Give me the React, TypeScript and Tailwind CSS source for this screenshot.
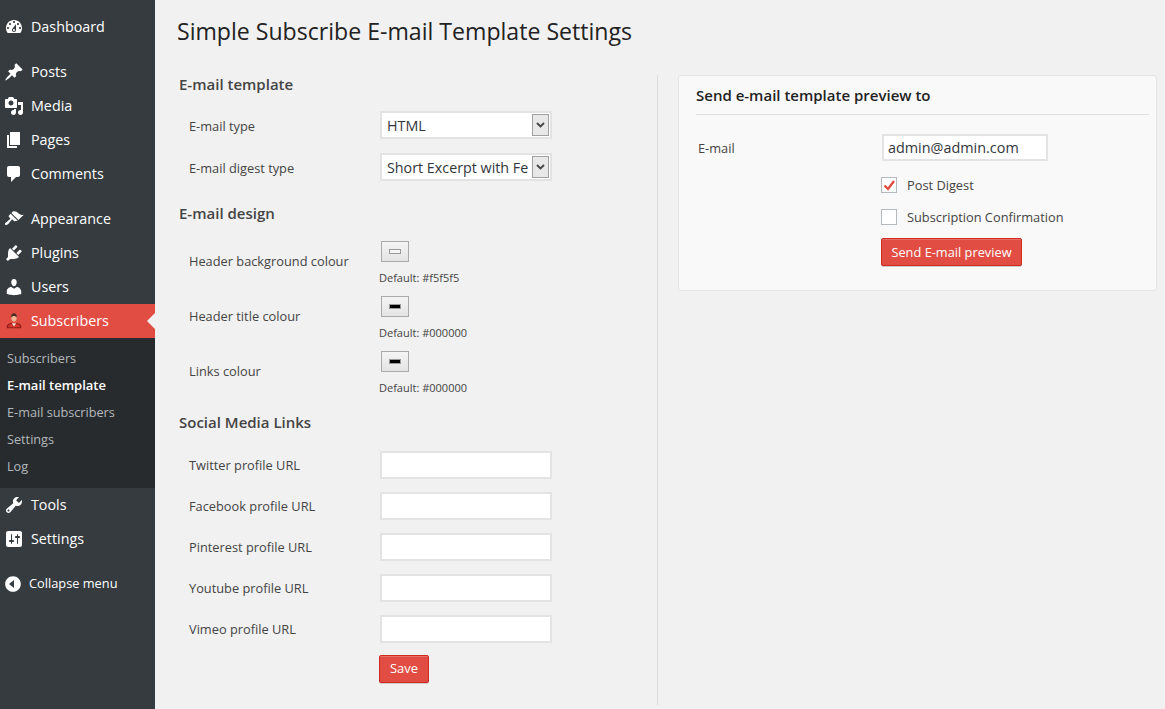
import React from "react";

const P: Record<string, string> = {
  dashboard:
    "M3.76 16h12.48c1.1-1.37 1.76-3.11 1.76-5 0-4.42-3.58-8-8-8s-8 3.58-8 8c0 1.89.66 3.63 1.76 5zM10 4c.55 0 1 .45 1 1s-.45 1-1 1-1-.45-1-1 .45-1 1-1zM6 6c.55 0 1 .45 1 1s-.45 1-1 1-1-.45-1-1 .45-1 1-1zm8 0c.55 0 1 .45 1 1s-.45 1-1 1-1-.45-1-1 .45-1 1-1zm-5.37 5.55L12 7v6c0 1.1-.9 2-2 2s-2-.9-2-2c0-.57.24-1.08.63-1.45zM4 10c.55 0 1 .45 1 1s-.45 1-1 1-1-.45-1-1 .45-1 1-1zm12 0c.55 0 1 .45 1 1s-.45 1-1 1-1-.45-1-1 .45-1 1-1zm-5 3c0-.55-.45-1-1-1s-1 .45-1 1 .45 1 1 1 1-.45 1-1z",
  pin: "M10.44 3.02l1.82-1.82 6.36 6.35-1.83 1.82c-1.05-.68-2.48-.57-3.41.36l-.75.75c-.92.93-1.04 2.35-.35 3.41l-1.83 1.82-2.41-2.41-2.8 2.79c-.42.42-3.38 2.71-3.8 2.29s1.86-3.39 2.28-3.81l2.79-2.79L4.1 9.36l1.83-1.82c1.05.69 2.48.57 3.4-.36l.75-.75c.93-.92 1.05-2.35.36-3.41z",
  media:
    "M13 11V4c0-.55-.45-1-1-1h-1.67L9 1H5L3.67 3H2c-.55 0-1 .45-1 1v7c0 .55.45 1 1 1h10c.55 0 1-.45 1-1zM7 4.5c1.38 0 2.5 1.12 2.5 2.5S8.38 9.5 7 9.5 4.5 8.38 4.5 7 5.62 4.5 7 4.5zM14 6h5v10.5c0 1.38-1.12 2.5-2.5 2.5S14 17.88 14 16.5s1.12-2.5 2.5-2.5c.17 0 .34.02.5.05V9h-3V6zm-4 8.05V13h2v3.5c0 1.38-1.12 2.5-2.5 2.5S7 17.88 7 16.5 8.12 14 9.5 14c.17 0 .34.02.5.05z",
  page: "M6 15V2h10v13H6zm-1 1h8v2H3V5h2v11z",
  comments: "M5 2h9c1.1 0 2 .9 2 2v7c0 1.1-.9 2-2 2h-2l-5 5v-5H5c-1.1 0-2-.9-2-2V4c0-1.1.9-2 2-2z",
  appearance:
    "M14.48 11.06L7.41 3.99l1.5-1.5c.5-.56 2.3-.47 3.51.32 1.21.8 1.43 1.28 2.91 2.1 1.18.64 2.45 1.26 4.45.85zm-.71.71L6.7 4.7 4.93 6.47c-.39.39-.39 1.02 0 1.41l1.06 1.06c.39.39.39 1.03 0 1.42-.6.6-1.43 1.11-2.21 1.69-.35.26-.7.53-1.01.84C1.43 13.23.4 14.89 1.2 15.7c.8.8 2.46-.23 3.8-1.56.31-.31.58-.66.85-1.02.57-.78 1.08-1.61 1.69-2.21.39-.39 1.02-.39 1.41 0l1.06 1.06c.39.39 1.02.39 1.41 0z",
  plugins:
    "M13.11 4.36L9.87 7.6 8 5.73l3.24-3.24c.35-.34 1.05-.2 1.56.32.52.51.66 1.21.31 1.55zm-8 1.77l.91-1.12 9.01 9.01-1.19.84c-.71.71-2.63 1.16-3.82 1.16H6.14L4.9 17.26c-.59.59-1.54.59-2.12 0-.59-.58-.59-1.53 0-2.12l1.24-1.24v-3.88c0-1.13.4-3.19 1.09-3.89zm7.26 3.97l3.24-3.24c.34-.35 1.04-.21 1.55.31.52.51.66 1.21.31 1.55l-3.24 3.25z",
  users:
    "M10 9.25c-2.27 0-2.73-3.44-2.73-3.44C7 4.02 7.82 2 9.97 2c2.16 0 2.98 2.02 2.71 3.81 0 0-.41 3.44-2.68 3.44zm0 2.57L12.72 10c2.39 0 4.52 2.33 4.52 4.53v2.49s-3.65 1.13-7.24 1.13c-3.65 0-7.24-1.13-7.24-1.13v-2.49c0-2.25 1.94-4.48 4.47-4.48z",
  tools:
    "M16.68 9.77c-1.34 1.34-3.3 1.67-4.95.99l-5.41 6.52c-.99.99-2.59.99-3.58 0s-.99-2.59 0-3.57l6.52-5.42c-.68-1.65-.35-3.61.99-4.95 1.28-1.28 3.12-1.62 4.72-1.06l-2.89 2.89 2.82 2.82 2.86-2.87c.53 1.58.18 3.39-1.08 4.65zM3.81 16.21c.4.39 1.04.39 1.43 0 .4-.4.4-1.04 0-1.43-.39-.4-1.03-.4-1.43 0-.39.39-.39 1.03 0 1.43z",
  settings:
    "M18 16V4c0-1.1-.9-2-2-2H4c-1.1 0-2 .9-2 2v12c0 1.1.9 2 2 2h12c1.1 0 2-.9 2-2zM8 11h1c.55 0 1 .45 1 1s-.45 1-1 1H8v1.5c0 .28-.22.5-.5.5s-.5-.22-.5-.5V13H6c-.55 0-1-.45-1-1s.45-1 1-1h1V5.5c0-.28.22-.5.5-.5s.5.22.5.5V11zm5-2h-1c-.55 0-1-.45-1-1s.45-1 1-1h1V5.5c0-.28.22-.5.5-.5s.5.22.5.5V7h1c.55 0 1 .45 1 1s-.45 1-1 1h-1v5.5c0 .28-.22.5-.5.5s-.5-.22-.5-.5V9z",
  collapse: "M10 2.16c4.33 0 7.84 3.51 7.84 7.84s-3.51 7.84-7.84 7.84-7.84-3.51-7.84-7.84S5.67 2.16 10 2.16zM11 14V6l-5 4z",
};

function Icon({ name }: { name: string }) {
  return (
    <svg viewBox="0 0 20 20" className="w-5 h-5 fill-white shrink-0" fillRule="evenodd">
      <path d={P[name]} />
    </svg>
  );
}

function SubscriberIcon() {
  return (
    <svg viewBox="0 0 20 20" className="w-[18px] h-[18px] shrink-0">
      <path d="M2 18v-2.500c0-1.600 2.600-2.700 4.600-3.200h6.800c2 .5 4.600 1.600 4.600 3.200V18z" fill="#8f1f18" />
      <path d="M3.500 17v-1.500c0-1 2-1.900 3.500-2.300l3 3 3-3c1.500.4 3.500 1.300 3.500 2.300V17z" fill="#d9352b" />
      <path d="M7.500 12.500 10 16l2.500-3.500z" fill="#fbe6dc" />
      <ellipse cx="10" cy="6.500" rx="3" ry="4.200" fill="#f0b795" />
      <path d="M7 6.500c-.6-3.300 1-5 3-5s3.600 1.700 3 5c-.8-1.500-1.600-2-3-2s-2.200.5-3 2z" fill="#4a2c20" />
    </svg>
  );
}

function MenuItem({ icon, label, current }: { icon: string; label: string; current?: boolean }) {
  return (
    <div className={`relative h-[34px] flex items-center text-[14.3px] text-white ${current ? "bg-[#e14d43]" : ""}`}>
      <span className="w-[28px] flex justify-center">{icon === "subscriber" ? <SubscriberIcon /> : <Icon name={icon} />}</span>
      <span className="ml-[3px]">{label}</span>
      {current && (
        <span className="absolute right-0 top-[9px] w-0 h-0 border-y-[8px] border-y-transparent border-r-[8px] border-r-[#f1f1f1]" />
      )}
    </div>
  );
}

function SubItem({ label, active }: { label: string; active?: boolean }) {
  return (
    <div className={`h-[27px] flex items-center pl-[7px] ${active ? "text-[13px] font-semibold text-white" : "text-[12.7px] text-[#b5b9bc]"}`}>{label}</div>
  );
}

function Sidebar() {
  return (
    <aside className="w-[155px] shrink-0 bg-[#363b3f] pt-[10px]">
      <MenuItem icon="dashboard" label="Dashboard" />
      <div className="mt-[11px]">
        <MenuItem icon="pin" label="Posts" />
        <MenuItem icon="media" label="Media" />
        <MenuItem icon="page" label="Pages" />
        <MenuItem icon="comments" label="Comments" />
      </div>
      <div className="mt-[11px]">
        <MenuItem icon="appearance" label="Appearance" />
        <MenuItem icon="plugins" label="Plugins" />
        <MenuItem icon="users" label="Users" />
        <MenuItem icon="subscriber" label="Subscribers" current />
      </div>
      <div className="bg-[#272b2e] pt-[7px] pb-[8px]">
        <SubItem label="Subscribers" />
        <SubItem label="E-mail template" active />
        <SubItem label="E-mail subscribers" />
        <SubItem label="Settings" />
        <SubItem label="Log" />
      </div>
      <MenuItem icon="tools" label="Tools" />
      <MenuItem icon="settings" label="Settings" />
      <div className="mt-[11px] h-[34px] flex items-center pl-[3px] text-[12.8px] text-white">
        <span className="w-[20px] flex justify-center"><Icon name="collapse" /></span>
        <span className="ml-[6px]">Collapse menu</span>
      </div>
    </aside>
  );
}

const fieldCls = "w-[172px] h-[28px] bg-white border-2 border-[#e3e3e3]";

function SelectBox({ value }: { value: string }) {
  return (
    <div className={`${fieldCls} flex items-center pl-[5px] pr-[1px] text-[14.3px] text-[#32373c]`}>
      <span className="flex-1 whitespace-nowrap pt-[2px]">{value}</span>
      <span className="w-[17px] h-[22px] shrink-0 flex items-center justify-center bg-[#e8e8e8] border border-[#a0a0a0]">
        <svg viewBox="0 0 9 6" className="w-[9px] h-[6px]">
          <path d="M1 1l3.500 3.500L8 1" fill="none" stroke="#444" strokeWidth="1.800" />
        </svg>
      </span>
    </div>
  );
}

function Heading({ children, className }: { children: React.ReactNode; className?: string }) {
  return <h3 className={`text-[15px] leading-[20px] font-[560] text-[#444] pl-[2px] ${className ?? ""}`}>{children}</h3>;
}

function Row({ label, children, className, labelCls }: { label: string; children: React.ReactNode; className?: string; labelCls: string }) {
  return (
    <div className={`flex items-center ${className ?? ""}`}>
      <label className={`w-[203px] pl-[12px] text-[12.8px] text-[#444] ${labelCls}`}>{label}</label>
      {children}
    </div>
  );
}

function ColourRow({ label, colour, def }: { label: string; colour: string; def: string }) {
  return (
    <div className="flex h-[55px]">
      <label className="w-[202px] pl-[12px] pt-[12px] text-[12.8px] leading-[18px] text-[#444]">{label}</label>
      <div className="pt-[1px]">
        <div className="ml-[2px] w-[28px] h-[21px] flex items-center justify-center border border-[#aaa] bg-[linear-gradient(#f4f4f4,#e4e4e4)]">
          <span className="w-[12px] h-[5px] border border-[#999]" style={{ background: colour }} />
        </div>
        <p className="mt-[9px] text-[11px] leading-[14px] text-[#444]">Default: {def}</p>
      </div>
    </div>
  );
}

function RedButton({ children, className }: { children: React.ReactNode; className?: string }) {
  return (
    <button className={`h-[28px] rounded-[2px] bg-[#e14d43] border border-[#d02a21] shadow-[0_1px_0_#ccc,inset_0_1px_0_rgba(255,255,255,0.2)] text-white ${className ?? ""}`}>
      {children}
    </button>
  );
}

function Check({ checked, label }: { checked?: boolean; label: string }) {
  return (
    <div className="flex items-center h-[16px] text-[12.8px] text-[#444]">
      <span className="w-[16px] h-[16px] bg-white border border-[#b4b9be] flex items-center justify-center shrink-0">
        {checked && (
          <svg viewBox="0 0 12 12" className="w-[12px] h-[12px]">
            <path d="M1.500 6.500 5 10 11 2" fill="none" stroke="#e14d43" strokeWidth="2.400" />
          </svg>
        )}
      </span>
      <span className="ml-[10px] pt-[2px]">{label}</span>
    </div>
  );
}

export default function App() {
  return (
    <div className="flex h-[709px] overflow-hidden bg-[#f1f1f1] font-['Open_Sans',sans-serif]">
      <Sidebar />
      <main className="flex-1 pl-[22px] pr-[8px]">
        <h1 className="pt-[14px] h-[75px] text-[23.1px] leading-[34px] text-[#222]">Simple Subscribe E-mail Template Settings</h1>
        <div className="flex">
          <div className="w-[481px] h-[630px] border-r border-[#dddddd] shrink-0">
            <Heading className="-mt-[1px]">E-mail template</Heading>
            <Row label="E-mail type" className="mt-[17px]" labelCls="pt-[4px]"><SelectBox value="HTML" /></Row>
            <Row label="E-mail digest type" className="mt-[14px]" labelCls="pt-[4px]"><SelectBox value="Short Excerpt with Fe" /></Row>
            <Heading className="mt-[22px]">E-mail design</Heading>
            <div className="mt-[17px]">
              <ColourRow label="Header background colour" colour="#f5f5f5" def="#f5f5f5" />
              <ColourRow label="Header title colour" colour="#000000" def="#000000" />
              <ColourRow label="Links colour" colour="#000000" def="#000000" />
            </div>
            <Heading className="mt-[7px]">Social Media Links</Heading>
            <div className="mt-[19px] flex flex-col gap-[13px]">
              {["Twitter", "Facebook", "Pinterest", "Youtube", "Vimeo"].map((n) => (
                <Row key={n} label={`${n} profile URL`} labelCls="pt-[2px]"><div className={fieldCls} /></Row>
              ))}
            </div>
            <div className="mt-[12px] pl-[202px]">
              <RedButton className="w-[50px] text-[13px]">Save</RedButton>
            </div>
          </div>
          <section className="ml-[20px] w-[479px] h-[216px] bg-[#f9f9f9] border border-[#e5e5e5] rounded-[3px] pl-[17px] pr-[7px]">
            <h2 className="h-[39px] leading-[39px] text-[15px] font-[560] text-[#222] border-b border-[#e1e1e1]">Send e-mail template preview to</h2>
            <div className="flex mt-[19px]">
              <div className="w-[185px] pl-[2px] pt-[5px] text-[12.8px] leading-[18px] text-[#444]">E-mail</div>
              <div className="w-[167px] flex flex-col">
                <div className="ml-[1px] w-[166px] h-[27px] bg-white border-2 border-[#e3e3e3] flex items-center pl-[4px] text-[14.4px] text-[#32373c]">admin@admin.com</div>
                <div className="mt-[16px]"><Check checked label="Post Digest" /></div>
                <div className="mt-[16px] w-[260px]"><Check label="Subscription Confirmation" /></div>
                <RedButton className="mt-[13px] w-[141px] shrink-0 pt-[1px] text-[12.8px]">Send E-mail preview</RedButton>
              </div>
            </div>
          </section>
        </div>
      </main>
    </div>
  );
}
